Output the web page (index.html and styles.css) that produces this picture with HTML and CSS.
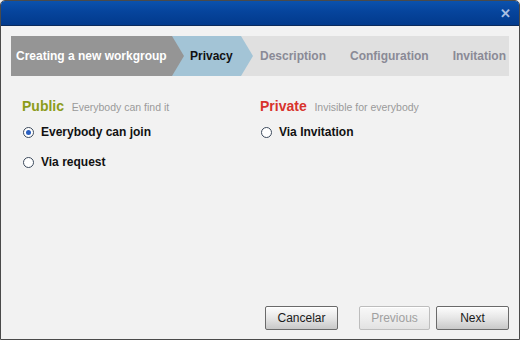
FILE: index.html
```html
<!DOCTYPE html>
<html lang="en">
<head>
    <meta charset="UTF-8">
    <title>Creating a new workgroup</title>
    <link rel="stylesheet" href="styles.css">
</head>
<body>
    <div class="dialog">
        <div class="titlebar">
            <span class="close">&#x2715;</span>
        </div>

        <div class="dialog-body">
            <div class="steps">
                <div class="step step-done">Creating a new workgroup</div>
                <div class="step step-current">Privacy</div>
                <div class="step step-todo">Description</div>
                <div class="step step-todo">Configuration</div>
                <div class="step step-todo">Invitation</div>
            </div>

            <div class="privacy-grid">
                <div class="privacy-col">
                    <h2 class="privacy-title"><span class="title-public">Public</span> <span class="hint">Everybody can find it</span></h2>
                    <label class="radio"><input type="radio" name="privacy" checked> Everybody can join</label>
                    <label class="radio"><input type="radio" name="privacy"> Via request</label>
                </div>
                <div class="privacy-col">
                    <h2 class="privacy-title"><span class="title-private">Private</span> <span class="hint">Invisible for everybody</span></h2>
                    <label class="radio"><input type="radio" name="privacy"> Via Invitation</label>
                </div>
            </div>

            <div class="footer">
                <button class="btn btn-cancel">Cancelar</button>
                <button class="btn" disabled>Previous</button>
                <button class="btn">Next</button>
            </div>
        </div>
    </div>
</body>
</html>
```

FILE: styles.css
```css
:root {
    --border: #4a4a4a;
    --body-bg: #f2f2f2;
    --bar-bg: #e0e0e0;
    --done: #959595;
    --current: #a3c4d6;
    --todo-text: #8a8a96;
    --green: #8c9c1a;
    --red: #d8322c;
}

*, *::before, *::after {
    box-sizing: border-box;
    margin: 0;
    padding: 0;
}

body {
    font-family: 'Liberation Sans', Arial, sans-serif;
    background: var(--body-bg);
}

.dialog {
    width: 520px;
    height: 340px;
    display: flex;
    flex-direction: column;
    border: 1px solid var(--border);
    border-radius: 5px 5px 0 0;
    background: var(--body-bg);
    overflow: hidden;
}

.titlebar {
    height: 25px;
    flex: none;
    background: linear-gradient(#0b52ad, #06449c 45%, #023a8c);
    border-bottom: 1px solid #0a2a5c;
    display: flex;
    justify-content: flex-end;
    align-items: center;
    padding: 1px 8px 0 0;
}
.close {
    color: #a9bfe3;
    font-size: 13px;
    font-weight: bold;
    line-height: 1;
}

.dialog-body {
    flex: 1;
    display: flex;
    flex-direction: column;
    padding: 10px 10px 9px 10px;
}

/* Steps */
.steps {
    display: flex;
    align-items: center;
    height: 40px;
    background: var(--bar-bg);
    font-size: 12px;
    font-weight: bold;
}
.step {
    height: 40px;
    line-height: 41px;
    white-space: nowrap;
    position: relative;
}
.step-done {
    width: 161px;
    padding-left: 5px;
    background: var(--done);
    color: #fff;
    z-index: 2;
}
.step-current {
    width: 69px;
    padding-left: 18px;
    background: var(--current);
    color: #111;
    z-index: 1;
}
.step-done::after,
.step-current::after {
    content: "";
    position: absolute;
    top: 0;
    left: 100%;
    border-top: 20px solid transparent;
    border-bottom: 20px solid transparent;
    border-left: 12px solid var(--done);
}
.step-current::after { border-left-color: var(--current); }
.step-todo {
    color: var(--todo-text);
    margin-left: 24px;
}
.step-current + .step-todo { margin-left: 19px; }

/* Privacy options */
.privacy-grid {
    display: grid;
    grid-template-columns: 238px 1fr;
    padding: 18px 0 0 11px;
}
.privacy-title {
    font-weight: normal;
    margin-bottom: 8px;
    line-height: 18px;
}
.title-public, .title-private {
    font-size: 14px;
    font-weight: bold;
}
.title-public { color: var(--green); }
.title-private { color: var(--red); }
.hint {
    font-size: 10.5px;
    color: #9a9a9a;
    margin-left: 1px;
}

.radio {
    display: flex;
    align-items: center;
    gap: 7px;
    font-size: 12px;
    font-weight: bold;
    color: #111;
    height: 16px;
    margin-bottom: 14px;
}
.radio input {
    appearance: none;
    width: 11px;
    height: 11px;
    margin-left: 1px;
    border: 1px solid #3c4a5c;
    border-radius: 50%;
    background: #fff;
    position: relative;
}
.radio input:checked::before {
    content: "";
    position: absolute;
    top: 2px;
    left: 2px;
    width: 5px;
    height: 5px;
    border-radius: 50%;
    background: #2a5fc0;
}

/* Footer */
.footer {
    margin-top: auto;
    display: flex;
    justify-content: flex-end;
    gap: 6px;
}
.btn {
    width: 73px;
    height: 24px;
    font-family: inherit;
    font-size: 12px;
    color: #1a1a1a;
    border: 1px solid #6a6a6a;
    border-radius: 2px;
    background: linear-gradient(#fdfdfd, #e6e6e6 50%, #c8c8c8);
    box-shadow: inset 0 1px 0 #fff;
}
.btn:disabled {
    width: 71px;
    color: #a0a0a0;
    border-color: #bdbdbd;
    background: linear-gradient(#f8f8f8, #eeeeee 50%, #e2e2e2);
}
.btn-cancel { margin-right: 15px; }
```
